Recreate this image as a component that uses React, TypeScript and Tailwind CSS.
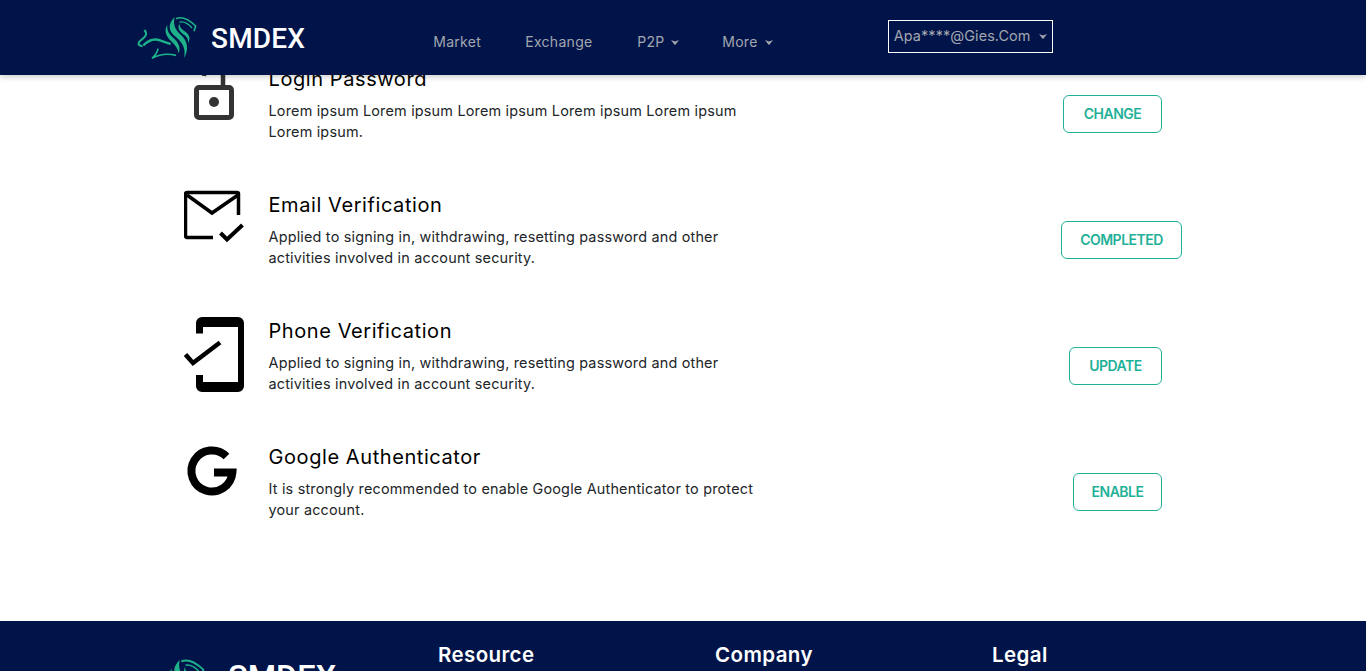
import type { ReactNode } from 'react'

const poppins = { fontFamily: 'Inter, "Noto Sans", sans-serif' }

function LionLogo({ className }: { className?: string }) {
  return (
    <svg viewBox="0 0 198 150" className={className} fill="#1fb28a">
      <path d="M128 16 C108 34 108 56 128 72 C146 86 164 106 156 138 C172 112 166 88 148 70 C130 54 122 38 128 16 Z" />
      <path d="M106 38 C94 58 104 74 118 88 C130 100 138 110 140 124 C148 104 136 88 124 78 C112 66 104 56 106 38 Z" />
      <path d="M142 34 C134 52 146 62 158 70 C166 76 170 84 168 94 C178 78 170 66 158 58 C150 52 142 46 142 34 Z" />
      <g fill="none" stroke="#1fb28a">
        <path d="M132 20 C150 12 172 24 191 42 L186 58" strokeWidth="5" />
        <path d="M143 30 C156 28 170 36 180 48" strokeWidth="4" />
        <path d="M37 54 C48 66 40 74 30 82 C18 90 14 100 32 103" strokeWidth="6" />
        <path d="M34 100 C50 84 68 78 86 86 C96 90 106 92 116 96" strokeWidth="7" />
        <path d="M78 110 C76 122 70 130 60 139 C80 128 100 122 132 130" strokeWidth="5" />
      </g>
    </svg>
  )
}

function Caret({ className }: { className?: string }) {
  return (
    <svg viewBox="0 0 8 6" className={className} fill="currentColor">
      <path d="M0 1 L4 2.5 L8 1 L5 5 L4 6 L3 5 Z" />
    </svg>
  )
}

function LockIcon() {
  return (
    <svg viewBox="184 60 60 62" className="h-[62px] w-[60px]" fill="none">
      <rect x="196.5" y="87.5" width="35" height="30" rx="2.5" stroke="#333" strokeWidth="5" />
      <circle cx="214" cy="102" r="5" fill="#333" />
      <path d="M223 86 V78 A9.5 9.5 0 0 0 204 76" stroke="#333" strokeWidth="4.5" />
    </svg>
  )
}

function MailIcon() {
  return (
    <svg viewBox="184 186 60 60" className="h-[60px] w-[60px]" fill="none" stroke="#000">
      <path d="M213 237.5 H187 A1.5 1.5 0 0 1 185.5 236 V194 A1.5 1.5 0 0 1 187 192.5 H237 A1.5 1.5 0 0 1 238.5 194 V215" strokeWidth="3.5" />
      <path d="M187 195 L212 213 L238 195" strokeWidth="3.5" />
      <path d="M220.5 233 L227 239.5 L242.5 225" strokeWidth="4" />
    </svg>
  )
}

function PhoneIcon() {
  return (
    <svg viewBox="184 312 60 80" className="h-[80px] w-[60px]">
      <path
        fillRule="evenodd"
        d="M203 317 H238 A6 6 0 0 1 244 323 V386 A6 6 0 0 1 238 392 H202 A6 6 0 0 1 196 386 V375 H203 V382 H238 V327 H203 V333.5 H196 V323 A6 6 0 0 1 202 317 Z"
        fill="#000"
      />
      <path d="M185.5 354.5 L193 363 L220 342.5" fill="none" stroke="#000" strokeWidth="4.5" />
    </svg>
  )
}

function GoogleIcon() {
  return (
    <svg viewBox="184 438 60 60" className="h-[60px] w-[60px]" fill="none">
      <path d="M226.5 456.5 A20.5 20.5 0 1 0 232.4 472.5 H214" stroke="#000" strokeWidth="8" />
    </svg>
  )
}

function SecurityRow({
  icon,
  title,
  lines,
  action,
  actionClass,
}: {
  icon: ReactNode
  title: string
  lines: string[]
  action: string
  actionClass: string
}) {
  return (
    <div className="flex h-[126px] items-start pl-[184px]">
      <div className="-mt-[7px] w-[84.5px] shrink-0">{icon}</div>
      <div className="w-[520px] shrink-0">
        <h3 className="text-[20px] leading-[24px] tracking-[0.58px] text-black">{title}</h3>
        <div className="mt-[8.5px] text-[14.4px] leading-[21px] tracking-[0.2px] text-[#212529]">
          {lines.map((line) => (
            <p key={line}>{line}</p>
          ))}
        </div>
      </div>
      <div className="mt-[28px] flex w-[373.5px] shrink-0 justify-end">
        <button
          type="button"
          className={`flex h-[38px] items-center justify-center rounded-[6px] border border-[#1fb198] bg-white pb-[2px] text-[14px] font-semibold tracking-[-0.5px] text-[#1fb198] ${actionClass}`}
        >
          {action}
        </button>
      </div>
    </div>
  )
}

export default function App() {
  return (
    <div className="flex h-[671px] flex-col overflow-hidden bg-white" style={poppins}>
      <header className="relative z-10 flex h-[75px] shrink-0 items-start bg-[#00144a] shadow-[0_2px_6px_rgba(0,0,0,0.2)]">
        <LionLogo className="ml-[132px] mt-[12px] h-[50px] w-[66px] shrink-0" />
        <span
          className="ml-[13px] mt-[22px] text-[28px] font-medium leading-[34px] tracking-[0.2px] text-white"
          style={{ fontFamily: 'Roboto, sans-serif' }}
        >
          SMDEX
        </span>
        <nav className="ml-[128px] mt-[33px] flex items-center text-[14px] leading-[18px] tracking-[0.3px] text-[#a3a6ae]">
          <span className="w-[92px]">Market</span>
          <span className="w-[112px]">Exchange</span>
          <span className="flex w-[85px] items-center">
            P2P
            <Caret className="ml-[6px] h-[6px] w-[8px]" />
          </span>
          <span className="flex items-center">
            More
            <Caret className="ml-[7px] h-[6px] w-[8px]" />
          </span>
        </nav>
        <div className="ml-[115px] mt-[20px] flex h-[33px] w-[165px] items-start justify-between border border-white pl-[5px] pr-[5px] pt-[6px] text-[14.4px] leading-[18px] tracking-[0.12px] text-[#a3a6ae]">
          <span>Apa****@Gies.Com</span>
          <Caret className="mt-[6px] h-[6px] w-[8px]" />
        </div>
      </header>

      <main className="-mt-px flex-1 overflow-hidden">
        <div className="-mt-[7px]">
          <SecurityRow
            icon={<LockIcon />}
            title="Login Password"
            lines={['Lorem ipsum Lorem ipsum Lorem ipsum Lorem ipsum Lorem ipsum', 'Lorem ipsum.']}
            action="CHANGE"
            actionClass="w-[99px]"
          />
          <SecurityRow
            icon={<MailIcon />}
            title="Email Verification"
            lines={['Applied to signing in, withdrawing, resetting password and other', 'activities involved in account security.']}
            action="COMPLETED"
            actionClass="-mr-[20px] w-[121px]"
          />
          <SecurityRow
            icon={<PhoneIcon />}
            title="Phone Verification"
            lines={['Applied to signing in, withdrawing, resetting password and other', 'activities involved in account security.']}
            action="UPDATE"
            actionClass="w-[93px]"
          />
          <SecurityRow
            icon={<GoogleIcon />}
            title="Google Authenticator"
            lines={['It is strongly recommended to enable Google Authenticator to protect', 'your account.']}
            action="ENABLE"
            actionClass="w-[89px]"
          />
        </div>
      </main>

      <footer className="flex h-[50px] shrink-0 items-start overflow-hidden bg-[#00144a] text-white">
        <div className="ml-[132px] mt-[33px] flex w-[306px] shrink-0 items-start">
          <LionLogo className="h-[56px] w-[74px] shrink-0" />
          <span className="ml-[22px] mt-[5px] text-[32.5px] font-medium leading-[38px]" style={{ fontFamily: 'Roboto, sans-serif' }}>
            SMDEX
          </span>
        </div>
        <div className="mt-[22px] flex text-[20.5px] font-semibold leading-[24px] tracking-[0.4px]">
          <span className="w-[277px]">Resource</span>
          <span className="w-[277px]">Company</span>
          <span>Legal</span>
        </div>
      </footer>
    </div>
  )
}
